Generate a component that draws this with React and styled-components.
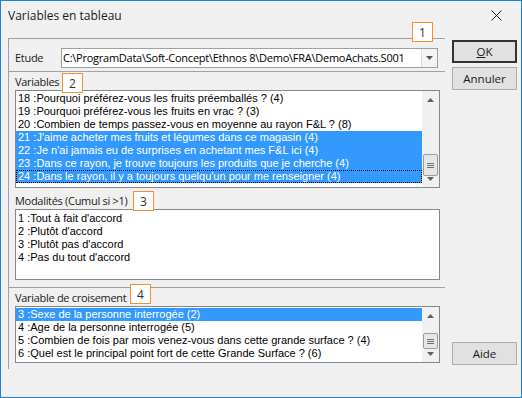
import React from 'react';
import styled, { createGlobalStyle } from 'styled-components';

const GlobalStyle = createGlobalStyle`
  html, body {
    margin: 0;
    padding: 0;
    background: #f0f0f0;
  }
  * {
    box-sizing: border-box;
  }
`;

const variables = [
  { id: 18, label: 'Pourquoi préférez-vous les fruits préemballés ? (4)' },
  { id: 19, label: 'Pourquoi préférez-vous les fruits en vrac ? (3)' },
  { id: 20, label: 'Combien de temps passez-vous en moyenne au rayon F&L ? (8)' },
  { id: 21, label: "J'aime acheter mes fruits et légumes dans ce magasin (4)", selected: true },
  { id: 22, label: "Je n'ai jamais eu de surprises en achetant mes F&L ici (4)", selected: true },
  { id: 23, label: 'Dans ce rayon, je trouve toujours les produits que je cherche (4)', selected: true },
  { id: 24, label: "Dans le rayon, il y a toujours quelqu'un pour me renseigner (4)", selected: true, focused: true },
];

const modalites = [
  { id: 1, label: 'Tout à fait d\'accord' },
  { id: 2, label: 'Plutôt d\'accord' },
  { id: 3, label: 'Plutôt pas d\'accord' },
  { id: 4, label: 'Pas du tout d\'accord' },
];

const croisements = [
  { id: 3, label: 'Sexe de la personne interrogée (2)', selected: true },
  { id: 4, label: 'Age de la personne interrogée (5)' },
  { id: 5, label: 'Combien de fois par mois venez-vous dans cette grande surface ? (4)' },
  { id: 6, label: 'Quel est le principal point fort de cette Grande Surface ? (6)' },
];

const ScrollBar = ({ thumbTop, thumbHeight }) => (
  <Scroll>
    <Arrow>
      <svg width="7" height="4" viewBox="0 0 7 4"><path d="M0 4 L3.5 0 L7 4 Z" fill="#606060" /></svg>
    </Arrow>
    <Track>
      <Thumb style={{ top: thumbTop, height: thumbHeight }}>
        <Grip />
        <Grip />
        <Grip />
      </Thumb>
    </Track>
    <Arrow>
      <svg width="7" height="4" viewBox="0 0 7 4"><path d="M0 0 L3.5 4 L7 0 Z" fill="#606060" /></svg>
    </Arrow>
  </Scroll>
);

const List = ({ items, height, padTop, scroll }) => (
  <ListBox $height={height}>
    <Rows $padTop={padTop}>
      {items.map((it) => (
        <Row key={it.id} $selected={it.selected} $focused={it.focused}>
          {it.id} :{it.label}
        </Row>
      ))}
    </Rows>
    {scroll && <ScrollBar {...scroll} />}
  </ListBox>
);

const App = () => (
  <>
    <GlobalStyle />
    <Window>
      <TitleBar>
        <Title>Variables en tableau</Title>
        <Close>
          <svg width="11" height="11" viewBox="0 0 11 11">
            <path d="M0.5 0.5 L10.5 10.5 M10.5 0.5 L0.5 10.5" stroke="#222" strokeWidth="1" />
          </svg>
        </Close>
      </TitleBar>
      <Body>
        <Main>
          <Group $height={33}>
            <Badge $left={403} $top={-17}>1</Badge>
            <EtudeRow>
              <EtudeLabel>Etude</EtudeLabel>
              <Combo>
                <ComboText>C:\ProgramData\Soft-Concept\Ethnos 8\Demo\FRA\DemoAchats.S001</ComboText>
                <ComboButton>
                  <svg width="7" height="4" viewBox="0 0 7 4"><path d="M0 0 L3.5 4 L7 0 Z" fill="#555" /></svg>
                </ComboButton>
              </Combo>
            </EtudeRow>
          </Group>

          <Group $height={216}>
            <Section>
              <LabelRow>
                <FieldLabel>Variables</FieldLabel>
                <Badge $left={47} $top={1}>2</Badge>
              </LabelRow>
              <List items={variables} height={98} padTop={1} scroll={{ thumbTop: 46, thumbHeight: 22 }} />
            </Section>
            <Section $gap={3}>
              <LabelRow>
                <FieldLabel>Modalités (Cumul si &gt;1)</FieldLabel>
                <Badge $left={118} $top={0}>3</Badge>
              </LabelRow>
              <List items={modalites} height={71} padTop={2} />
            </Section>
          </Group>

          <Group $height={82}>
            <Section>
              <LabelRow>
                <FieldLabel>Variable de croisement</FieldLabel>
                <Badge $left={115} $top={-4}>4</Badge>
              </LabelRow>
              <List items={croisements} height={57} padTop={1} scroll={{ thumbTop: 9, thumbHeight: 16 }} />
            </Section>
          </Group>
        </Main>

        <Buttons>
          <Button $default>
            <u>O</u>K
          </Button>
          <Button>Annuler</Button>
          <Spacer />
          <Button>Aide</Button>
        </Buttons>
      </Body>
    </Window>
  </>
);

const Window = styled.div`
  position: relative;
  width: 522px;
  height: 398px;
  border: 1px solid #1883d7;
  background: #f0f0f0;
  font-family: "Liberation Sans", Arial, sans-serif;
  color: #000;
  overflow: hidden;
`;

const TitleBar = styled.div`
  height: 29px;
  display: flex;
  align-items: center;
  justify-content: space-between;
  padding: 0 19px 0 7px;
  background: #f0f0f0;
`;

const Title = styled.div`
  font-family: "Open Sans", "Noto Sans", sans-serif;
  font-size: 12px;
  color: #1a1a1a;
  margin-top: -1px;
`;

const Close = styled.div`
  display: flex;
  align-items: center;
`;

const Body = styled.div`
  display: flex;
  padding: 8px 0 0 7px;
`;

const Main = styled.div`
  width: 437px;
  display: flex;
  flex-direction: column;
`;

const Group = styled.div`
  position: relative;
  height: ${(p) => p.$height}px;
  border-top: 1px solid #a0a0a0;
  border-left: 1px solid #a0a0a0;
  padding-left: 6px;
`;

const Section = styled.div`
  display: flex;
  flex-direction: column;
  margin-top: ${(p) => p.$gap || 0}px;
  width: 425px;
`;

const LabelRow = styled.div`
  position: relative;
  height: 18px;
  display: flex;
  align-items: center;
`;

const FieldLabel = styled.span`
  font-family: "Open Sans", "Noto Sans", sans-serif;
  font-size: 11px;
  color: #1a1a1a;
  letter-spacing: -0.3px;
`;

const EtudeLabel = styled(FieldLabel)`
  width: 46px;
  flex-shrink: 0;
`;

const Badge = styled.div`
  position: absolute;
  left: ${(p) => p.$left}px;
  top: ${(p) => p.$top}px;
  width: 21px;
  height: 20px;
  background: #fff;
  border: 1.5px solid #f39131;
  display: flex;
  align-items: center;
  justify-content: center;
  font-family: "Open Sans", "Noto Sans", sans-serif;
  font-size: 12px;
  color: #333;
  z-index: 2;
`;

const EtudeRow = styled.div`
  display: flex;
  align-items: center;
  height: 31px;
  padding-top: 6px;
`;

const Combo = styled.div`
  display: flex;
  width: 377px;
  height: 20px;
  background: #fff;
  border: 1px solid #a0a0a0;
`;

const ComboText = styled.div`
  flex: 1;
  font-family: "Open Sans", "Noto Sans", sans-serif;
  font-size: 11px;
  line-height: 18px;
  padding-left: 1px;
  white-space: nowrap;
  overflow: hidden;
  letter-spacing: -0.25px;
`;

const ComboButton = styled.div`
  width: 16px;
  border-left: 1px solid #dcdcdc;
  background: #f4f4f4;
  display: flex;
  align-items: center;
  justify-content: center;
`;

const ListBox = styled.div`
  display: flex;
  height: ${(p) => p.$height}px;
  background: #fff;
  border: 1px solid #828790;
`;

const Rows = styled.div`
  flex: 1;
  min-width: 0;
  padding-top: ${(p) => p.$padTop}px;
  overflow: hidden;
`;

const Row = styled.div`
  height: 13px;
  line-height: 13px;
  font-size: 11px;
  padding-left: 2px;
  white-space: nowrap;
  background: ${(p) => (p.$selected ? '#3399ff' : 'transparent')};
  color: ${(p) => (p.$selected ? '#fff' : '#000')};
  outline: ${(p) => (p.$focused ? '1px dotted #000' : 'none')};
  outline-offset: -1px;
`;

const Scroll = styled.div`
  width: 17px;
  display: flex;
  flex-direction: column;
  background: #f0f0f0;
`;

const Arrow = styled.div`
  height: 17px;
  display: flex;
  align-items: center;
  justify-content: center;
`;

const Track = styled.div`
  position: relative;
  flex: 1;
`;

const Thumb = styled.div`
  position: absolute;
  left: 1px;
  right: 1px;
  background: #e6e6e6;
  border: 1px solid #9c9c9c;
  border-radius: 2px;
  display: flex;
  flex-direction: column;
  align-items: center;
  justify-content: center;
  gap: 1px;
`;

const Grip = styled.div`
  width: 7px;
  height: 1px;
  background: #707070;
`;

const Buttons = styled.div`
  width: 65px;
  margin-left: 7px;
  display: flex;
  flex-direction: column;
  gap: 4px;
  padding-top: 2px;
`;

const Spacer = styled.div`
  height: 244px;
`;

const Button = styled.button`
  height: 23px;
  padding: 0;
  background: #e1e1e1;
  border: 1px solid ${(p) => (p.$default ? '#333' : '#adadad')};
  box-shadow: ${(p) => (p.$default ? 'inset 0 0 0 1px #333' : 'none')};
  font-family: "Open Sans", "Noto Sans", sans-serif;
  font-size: 11.5px;
  color: #1a1a1a;
`;

export default App;
